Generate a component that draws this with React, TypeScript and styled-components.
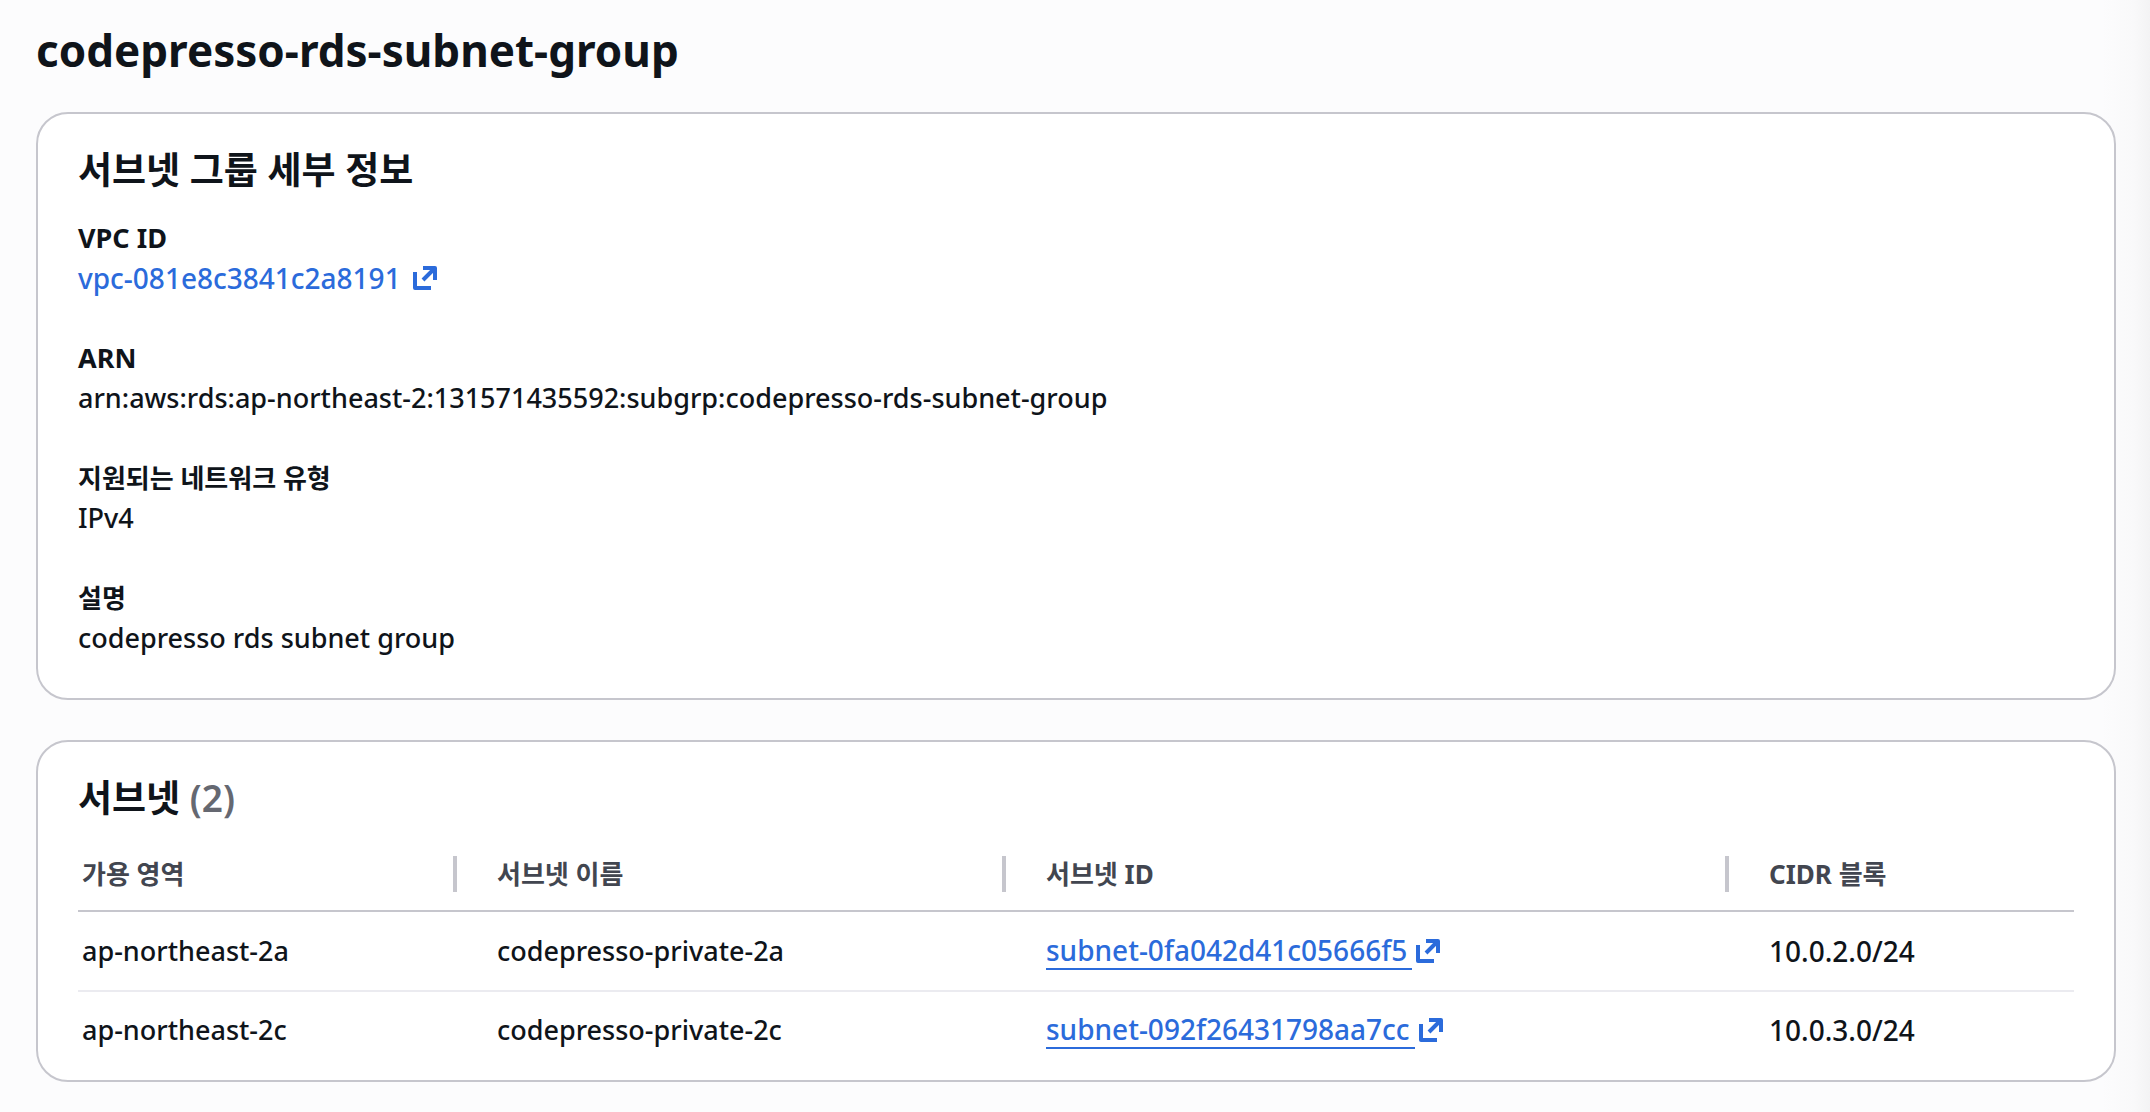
import React from 'react';
import styled, { createGlobalStyle } from 'styled-components';

const color = {
  page: '#fcfcfd',
  text: '#0f141a',
  header: '#424650',
  counter: '#656871',
  link: '#2b6bdb',
  border: '#c6c6cd',
  rowBorder: '#ebebf0',
};

const GlobalStyle = createGlobalStyle`
  *, *::before, *::after { box-sizing: border-box; }
  body {
    margin: 0;
    background: ${color.page};
    color: ${color.text};
    font-family: 'Noto Sans', 'Noto Sans CJK KR', sans-serif;
    font-size: 27px;
    font-weight: 500;
    line-height: 40px;
  }
`;

const Page = styled.main`
  min-height: 100vh;
  padding: 22px 34px 30px 36px;
  background: linear-gradient(to left, #f3f3f4 0, #f9f9fa 16px, ${color.page} 48px);
`;

const Title = styled.h1`
  margin: 0 0 34px;
  font-size: 44px;
  line-height: 56px;
  font-weight: 700;
`;

const Stack = styled.div`
  display: flex;
  flex-direction: column;
  gap: 40px;
`;

const Card = styled.section`
  padding: 32px 40px 40px;
  background: #fff;
  border: 2px solid ${color.border};
  border-radius: 32px;
`;

const TableCard = styled(Card)`
  padding-bottom: 12px;
`;

const CardTitle = styled.h2`
  margin: 0;
  font-size: 37px;
  line-height: 48px;
  font-weight: 700;
`;

const Counter = styled.span`
  color: ${color.counter};
  font-weight: 600;
`;

const Details = styled.dl`
  display: flex;
  flex-direction: column;
  gap: 40px;
  margin: 24px 0 0;
`;

const Detail = styled.div`
  display: flex;
  flex-direction: column;
`;

const Label = styled.dt`
  font-weight: 700;

  &:lang(ko) {
    font-size: 26px;
  }
`;

const Value = styled.dd`
  margin: 0;
`;

const ExternalAnchor = styled.a<{ $underlined?: boolean }>`
  display: flex;
  width: fit-content;
  align-items: center;
  gap: ${(p) => (p.$underlined ? 4 : 12)}px;
  height: 40px;
  font-size: 28px;
  color: ${color.link};
  text-decoration: none;
`;

const AnchorText = styled.span<{ $underlined?: boolean }>`
  padding-right: ${(p) => (p.$underlined ? 5 : 0)}px;
  border-bottom: ${(p) => (p.$underlined ? `2px solid ${color.link}` : 'none')};
  line-height: 36px;
`;

const Icon = styled.svg`
  width: 24px;
  height: 24px;
  flex: none;
`;

const Table = styled.table`
  width: 100%;
  margin-top: 16px;
  table-layout: fixed;
  border-collapse: separate;
  border-spacing: 0;
`;

const Column = styled.col<{ $width?: number }>`
  width: ${(p) => (p.$width ? `${p.$width}px` : 'auto')};
`;

const HeaderCell = styled.th`
  padding: 0 0 0 40px;
  border-bottom: 2px solid ${color.border};
  color: ${color.header};
  font-size: 26px;
  font-weight: 700;
  text-align: left;

  &:first-child {
    padding-left: 4px;
  }
`;

const HeaderContent = styled.div`
  display: flex;
  align-items: center;
  justify-content: space-between;
  height: 72px;

  ${HeaderCell}:not(:last-child) &::after {
    content: '';
    width: 4px;
    height: 36px;
    background: ${color.border};
  }
`;

const Cell = styled.td`
  height: 80px;
  padding: 0 0 0 40px;
  border-bottom: 2px solid ${color.rowBorder};

  &:first-child {
    padding-left: 4px;
  }

  &:last-child {
    font-size: 28px;
  }

  tr:last-child > & {
    height: 76px;
    border-bottom: 0;
  }
`;

function ExternalLink({ text, underlined }: { text: string; underlined?: boolean }) {
  return (
    <ExternalAnchor href="#" $underlined={underlined}>
      <AnchorText $underlined={underlined}>{text}</AnchorText>
      <Icon viewBox="0 0 24 24" fill="none" stroke="currentColor" strokeWidth="4" aria-hidden="true">
        <path d="M10 2h12v12M21.5 2.5L10 14M2 6v16h16" strokeLinejoin="round" />
      </Icon>
    </ExternalAnchor>
  );
}

const columns = [
  { title: '가용 영역', width: 379 },
  { title: '서브넷 이름', width: 549 },
  { title: '서브넷 ID', width: 723 },
  { title: 'CIDR 블록' },
];

const subnets = [
  { zone: 'ap-northeast-2a', name: 'codepresso-private-2a', id: 'subnet-0fa042d41c05666f5', cidr: '10.0.2.0/24' },
  { zone: 'ap-northeast-2c', name: 'codepresso-private-2c', id: 'subnet-092f26431798aa7cc', cidr: '10.0.3.0/24' },
];

export default function App() {
  return (
    <Page>
      <GlobalStyle />
      <Title>codepresso-rds-subnet-group</Title>
      <Stack>
        <Card>
          <CardTitle>서브넷 그룹 세부 정보</CardTitle>
          <Details>
            <Detail>
              <Label>VPC ID</Label>
              <Value><ExternalLink text="vpc-081e8c3841c2a8191" /></Value>
            </Detail>
            <Detail>
              <Label>ARN</Label>
              <Value>arn:aws:rds:ap-northeast-2:131571435592:subgrp:codepresso-rds-subnet-group</Value>
            </Detail>
            <Detail>
              <Label lang="ko">지원되는 네트워크 유형</Label>
              <Value>IPv4</Value>
            </Detail>
            <Detail>
              <Label lang="ko">설명</Label>
              <Value>codepresso rds subnet group</Value>
            </Detail>
          </Details>
        </Card>
        <TableCard>
          <CardTitle>서브넷 <Counter>({subnets.length})</Counter></CardTitle>
          <Table>
            <colgroup>
              {columns.map((c) => <Column key={c.title} $width={c.width} />)}
            </colgroup>
            <thead>
              <tr>
                {columns.map((c) => (
                  <HeaderCell key={c.title} scope="col">
                    <HeaderContent>{c.title}</HeaderContent>
                  </HeaderCell>
                ))}
              </tr>
            </thead>
            <tbody>
              {subnets.map((s) => (
                <tr key={s.id}>
                  <Cell>{s.zone}</Cell>
                  <Cell>{s.name}</Cell>
                  <Cell><ExternalLink text={s.id} underlined /></Cell>
                  <Cell>{s.cidr}</Cell>
                </tr>
              ))}
            </tbody>
          </Table>
        </TableCard>
      </Stack>
    </Page>
  );
}
